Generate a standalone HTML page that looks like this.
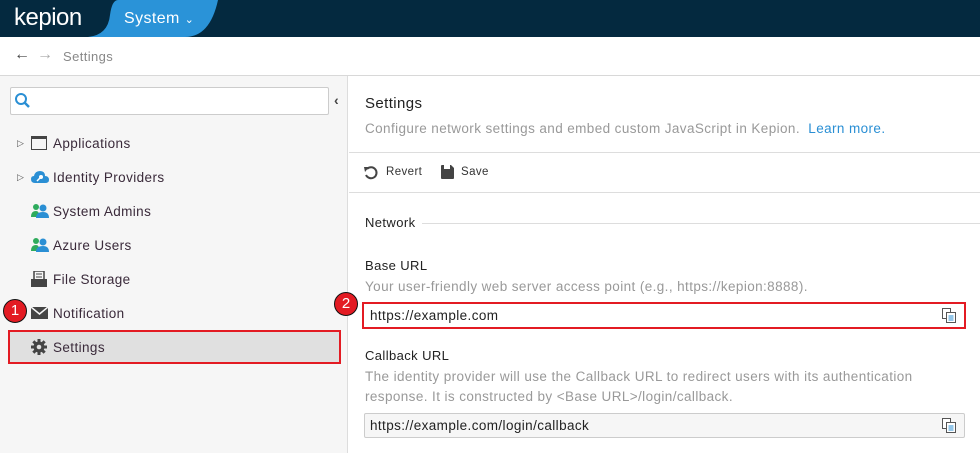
<!DOCTYPE html>
<html><head><style>
*{margin:0;padding:0;box-sizing:border-box}
body{width:980px;height:453px;overflow:hidden;font-family:"Liberation Sans",sans-serif;background:#fff;position:relative;color:#222;letter-spacing:0.4px}
.a{position:absolute;white-space:nowrap}
.nav{font-size:13.5px;color:#3a2a3a}
.g{color:#999;font-size:13.5px}
.badge{position:absolute;width:24px;height:24px;border-radius:50%;background:#e31b23;border:1.5px solid #111;color:#fff;font-size:15px;text-align:center;line-height:21px;letter-spacing:0}
</style></head><body>
<div class="a" style="left:0;top:0;width:980px;height:37px;background:#04293f"></div>
<svg class="a" style="left:0;top:0" width="230" height="37"><path d="M118 0 H218 Q210 37 185 37 H88 Q108 35 110 15 Q112 0 118 0Z" fill="#2a93d8"/></svg>
<div class="a" style="left:14px;top:4px;font-size:24px;color:#fff;letter-spacing:-0.5px">kepion</div>
<div class="a" style="left:124px;top:10px;font-size:16px;color:#fff">System <span style="font-size:11px">&#8964;</span></div>
<div class="a" style="left:14px;top:46px;font-size:16px;color:#444">&#8592;</div>
<div class="a" style="left:37px;top:46px;font-size:16px;color:#aaa">&#8594;</div>
<div class="a" style="left:63px;top:49px;font-size:13px;color:#888">Settings</div>
<div class="a" style="left:0;top:75px;width:980px;height:1px;background:#d8d8d8"></div>
<div class="a" style="left:0;top:76px;width:348px;height:377px;background:#f6f6f6;border-right:1px solid #ddd"></div>
<div class="a" style="left:10px;top:87px;width:319px;height:28px;background:#fff;border:1px solid #ccc;border-radius:2px"></div>
<svg class="a" style="left:14px;top:92px" width="18" height="18"><circle cx="7" cy="7" r="5" fill="none" stroke="#2a8fd4" stroke-width="2"/><path d="M10.5 10.5 L15 15" stroke="#2a8fd4" stroke-width="2.5"/></svg>
<div class="a" style="left:334px;top:92px;font-size:14px;color:#444;font-weight:bold">&#8249;</div>
<div class="a" style="left:17px;top:138px;font-size:9px;color:#555">&#9655;</div>
<div class="a" style="left:31px;top:136px;width:16px;height:14px;border:1.5px solid #444;border-top-width:3px"></div>
<div class="a nav" style="left:53px;top:136px">Applications</div>
<div class="a" style="left:17px;top:172px;font-size:9px;color:#555">&#9655;</div>
<svg class="a" style="left:31px;top:169px" width="18" height="16"><path d="M4 14 Q0 14 0 10 Q0 7 3 7 Q4 2 9 2 Q14 2 14 7 Q18 7 18 11 Q18 14 14 14Z" fill="#2a8fd4"/><circle cx="10" cy="8" r="2" fill="#fff"/><path d="M9 9 L6 12" stroke="#fff" stroke-width="1.5"/></svg>
<div class="a nav" style="left:53px;top:170px">Identity Providers</div>
<svg class="a" style="left:31px;top:203px" width="18" height="16"><circle cx="5" cy="4" r="3" fill="#2eab5c"/><path d="M0 14 Q0 8 5 8 Q8 8 8 12 V14Z" fill="#2eab5c"/><circle cx="12" cy="5" r="3.5" fill="#2a8fd4"/><path d="M5 15 Q5 9 12 9 Q18 9 18 15Z" fill="#2a8fd4"/></svg>
<div class="a nav" style="left:53px;top:204px">System Admins</div>
<svg class="a" style="left:31px;top:237px" width="18" height="16"><circle cx="5" cy="4" r="3" fill="#2eab5c"/><path d="M0 14 Q0 8 5 8 Q8 8 8 12 V14Z" fill="#2eab5c"/><circle cx="12" cy="5" r="3.5" fill="#2a8fd4"/><path d="M5 15 Q5 9 12 9 Q18 9 18 15Z" fill="#2a8fd4"/></svg>
<div class="a nav" style="left:53px;top:238px">Azure Users</div>
<svg class="a" style="left:31px;top:271px" width="16" height="16"><rect x="3" y="0" width="10" height="9" fill="none" stroke="#444" stroke-width="1.5"/><path d="M5 3h6M5 6h6" stroke="#444"/><rect x="0" y="8" width="16" height="8" fill="#444"/></svg>
<div class="a nav" style="left:53px;top:272px">File Storage</div>
<svg class="a" style="left:31px;top:307px" width="17" height="12"><rect width="17" height="12" fill="#444"/><path d="M0 0 L8.5 7 L17 0" stroke="#f6f6f6" stroke-width="1.5" fill="none"/></svg>
<div class="a nav" style="left:53px;top:306px">Notification</div>
<div class="a" style="left:8px;top:330px;width:333px;height:34px;background:#e0e0e0;border:2px solid #e31b23"></div>
<svg class="a" style="left:31px;top:339px" width="16" height="16" viewBox="0 0 16 16"><g fill="#444"><circle cx="8" cy="8" r="5.5"/><rect x="6.5" y="0" width="3" height="16"/><rect x="0" y="6.5" width="16" height="3"/><rect x="6.5" y="0" width="3" height="16" transform="rotate(45 8 8)"/><rect x="6.5" y="0" width="3" height="16" transform="rotate(-45 8 8)"/></g><circle cx="8" cy="8" r="2.3" fill="#e0e0e0"/></svg>
<div class="a nav" style="left:53px;top:340px">Settings</div>
<div class="badge" style="left:3px;top:299px">1</div>
<div class="badge" style="left:334px;top:292px">2</div>

<div class="a" style="left:365px;top:95px;font-size:15px;color:#222">Settings</div>
<div class="a g" style="left:365px;top:121px">Configure network settings and embed custom JavaScript in Kepion. &nbsp;<span style="color:#2a8fd4">Learn more.</span></div>
<div class="a" style="left:349px;top:152px;width:631px;height:1px;background:#ddd"></div>
<svg class="a" style="left:364px;top:166px" width="14" height="14"><path d="M3 3 A5.5 5.5 0 1 1 2 9" fill="none" stroke="#444" stroke-width="2"/><path d="M0 1 L5 1 L1 6Z" fill="#444"/></svg>
<div class="a" style="left:386px;top:166px;font-size:11.5px;color:#333">Revert</div>
<svg class="a" style="left:441px;top:165px" width="13" height="14"><path d="M0 1 Q0 0 1 0 H10 L13 3 V13 Q13 14 12 14 H1 Q0 14 0 13Z" fill="#444"/><rect x="3" y="0" width="6" height="4" fill="#fff"/></svg>
<div class="a" style="left:461px;top:166px;font-size:11.5px;color:#333">Save</div>
<div class="a" style="left:349px;top:192px;width:631px;height:1px;background:#ddd"></div>
<div class="a" style="left:365px;top:215px;font-size:13px;color:#222">Network</div>
<div class="a" style="left:422px;top:223px;width:558px;height:1px;background:#ddd"></div>
<div class="a" style="left:365px;top:258px;font-size:13px;color:#222">Base URL</div>
<div class="a g" style="left:365px;top:279px">Your user-friendly web server access point (e.g., https://kepion:8888).</div>
<div class="a" style="left:362px;top:302px;width:604px;height:27px;border:2px solid #e31b23;background:#fff"></div>
<div class="a" style="left:370px;top:308px;font-size:13.5px;color:#222">https://example.com</div>
<svg class="a" style="left:942px;top:308px" width="14" height="15"><rect x="0.5" y="0.5" width="8" height="10" fill="#fff" stroke="#555"/><rect x="4.5" y="4.5" width="9" height="10" fill="#fff" stroke="#555"/><path d="M6.5 8h5M6.5 10h5M6.5 12h5" stroke="#2a8fd4"/></svg>
<div class="a" style="left:365px;top:348px;font-size:13px;color:#222">Callback URL</div>
<div class="a g" style="left:365px;top:369px">The identity provider will use the Callback URL to redirect users with its authentication</div>
<div class="a g" style="left:365px;top:389px">response. It is constructed by &lt;Base URL&gt;/login/callback.</div>
<div class="a" style="left:364px;top:413px;width:601px;height:25px;border:1px solid #ccc;background:#f6f6f6;border-radius:2px"></div>
<div class="a" style="left:370px;top:418px;font-size:13.5px;color:#222">https://example.com/login/callback</div>
<svg class="a" style="left:942px;top:418px" width="14" height="15"><rect x="0.5" y="0.5" width="8" height="10" fill="#fff" stroke="#555"/><rect x="4.5" y="4.5" width="9" height="10" fill="#fff" stroke="#555"/><path d="M6.5 8h5M6.5 10h5M6.5 12h5" stroke="#2a8fd4"/></svg>
</body></html>
